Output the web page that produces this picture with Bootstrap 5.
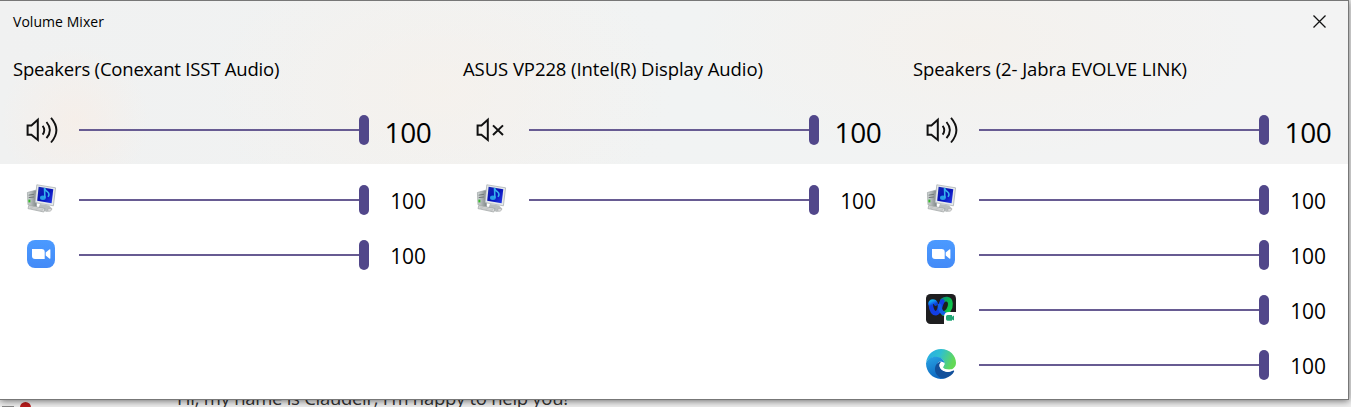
<!DOCTYPE html>
<html lang="en">
<head>
    <meta charset="UTF-8">
    <meta name="viewport" content="width=device-width, initial-scale=1.0">
    <title>Volume Mixer</title>
    <link rel="stylesheet" href="https://cdn.jsdelivr.net/npm/bootstrap@5.3.0/dist/css/bootstrap.min.css">
    <script src="https://cdn.jsdelivr.net/npm/bootstrap@5.3.0/dist/js/bootstrap.bundle.min.js"></script>
    <style>
        body {
            height: 407px;
            background: #eee;
            color: #000;
            font-family: 'Open Sans', 'Noto Sans', sans-serif;
        }

        .mixer-window {
            width: 1349px;
            height: 400px;
            border: solid #777;
            border-width: 1px 1px 1px 0;
            box-shadow: 0 1px 7px rgba(0, 0, 0, 0.55);
            z-index: 1;
        }

        .title-bar {
            height: 41px;
            padding: 0 21px 0 13px;
        }

        .window-title {
            font-size: 14px;
            letter-spacing: 0.05px;
        }

        .acrylic {
            height: 163px;
            background:
                radial-gradient(circle at 75px 120px, rgba(249, 237, 228, 0.6), transparent 75px),
                radial-gradient(ellipse 230px 150px at 440px 90px, rgba(249, 240, 231, 0.5), transparent),
                radial-gradient(ellipse 280px 120px at 970px 40px, rgba(247, 239, 230, 0.45), transparent),
                linear-gradient(90deg, #f0f1f1, #f1f3f3 50%, #f3f3f3);
        }

        .device {
            width: 450px;
            padding-left: 13px;
        }

        .device-name {
            height: 56px;
            line-height: 54px;
            font-size: 18.5px;
            letter-spacing: -0.08px;
        }

        .device:first-child .device-name {
            letter-spacing: -0.2px;
        }

        .mixer-row {
            height: 55px;
            padding-left: 11px;
        }

        .master-row {
            height: 64px;
        }

        .mixer-icon {
            width: 36px;
            height: 36px;
            margin-right: 19px;
        }

        .slider {
            width: 290px;
            height: 30px;
        }

        .slider-track {
            height: 2px;
            background: #675b92;
        }

        .slider-thumb {
            width: 10px;
            height: 30px;
            border-radius: 5px;
            background: #51478a;
        }

        .level {
            width: 78px;
            padding-top: 3px;
            font-size: 21px;
            letter-spacing: -0.2px;
        }

        .master-row .level {
            padding-top: 3px;
            font-size: 28px;
            letter-spacing: -0.3px;
        }

        .page-behind {
            height: 7px;
        }

        .chat-line {
            margin: -14px 0 0 177px;
            font-size: 18.5px;
            line-height: 24px;
            letter-spacing: -0.28px;
            color: #333;
        }

        .tray-dash {
            width: 12px;
            height: 2px;
            margin: 6px 6px 0 2px;
            background: #888;
        }

        .tray-dot {
            width: 11px;
            height: 11px;
            margin-top: 2px;
            background: #b91c1c;
        }
    </style>
</head>
<body class="overflow-hidden">

<svg class="position-absolute" width="0" height="0" aria-hidden="true">
    <defs>
        <linearGradient id="screenFill" x1="0" y1="0" x2="1" y2="1">
            <stop offset="0" stop-color="#1526ae"/>
            <stop offset=".5" stop-color="#0712b8"/>
            <stop offset="1" stop-color="#293dea"/>
        </linearGradient>
        <linearGradient id="caseFill" x1="0" y1="0" x2="1" y2="0">
            <stop offset="0" stop-color="#d5dada"/>
            <stop offset="1" stop-color="#7f8787"/>
        </linearGradient>
        <linearGradient id="zoomFill" x1="0" y1="0" x2="0" y2="1">
            <stop offset="0" stop-color="#4b9aff"/>
            <stop offset="1" stop-color="#438af7"/>
        </linearGradient>
        <linearGradient id="webexLeft" x1="0" y1="0" x2="1" y2="1">
            <stop offset="0" stop-color="#12a9ef"/>
            <stop offset=".5" stop-color="#1272ed"/>
            <stop offset="1" stop-color="#0b43d6"/>
        </linearGradient>
        <linearGradient id="webexRight" x1="0" y1="0" x2="1" y2="1">
            <stop offset="0" stop-color="#0b8f7a"/>
            <stop offset=".4" stop-color="#09b450"/>
            <stop offset="1" stop-color="#13d34c"/>
        </linearGradient>
        <linearGradient id="edgeTop" x1="0" y1="0" x2="1" y2=".3">
            <stop offset="0" stop-color="#28a9e8"/>
            <stop offset=".5" stop-color="#2fbfd0"/>
            <stop offset="1" stop-color="#63d957"/>
        </linearGradient>
        <linearGradient id="edgeLeft" x1="0" y1="0" x2=".4" y2="1">
            <stop offset="0" stop-color="#2aa5e5"/>
            <stop offset="1" stop-color="#0e68c0"/>
        </linearGradient>
    </defs>

    <symbol id="speaker" viewBox="0 0 36 36">
        <path d="M3.6 13.4H7.4L13.8 7.8V28L7.4 22.8H3.6Z" fill="none" stroke="#111" stroke-width="2"/>
    </symbol>
    <symbol id="speaker-on" viewBox="0 0 36 36">
        <use href="#speaker" width="36" height="36"/>
        <g fill="none" stroke="#111" stroke-width="1.9">
            <path d="M18.6 13.8Q22 18.1 18.6 22.6"/>
            <path d="M22.5 10Q29.3 18.1 22.5 26.2"/>
            <path d="M27 5.8Q37.8 18.1 27 30.5"/>
        </g>
    </symbol>
    <symbol id="speaker-muted" viewBox="0 0 36 36">
        <use href="#speaker" width="36" height="36"/>
        <path d="M19 13.4L29 23M29 13.4L19 23" fill="none" stroke="#111" stroke-width="2"/>
    </symbol>
    <symbol id="system-sounds" viewBox="0 0 36 36">
        <path d="M3.4 10.5L12.5 8V25L4 22.8Z" fill="url(#caseFill)" stroke="#9ca3a3" stroke-width=".7"/>
        <path d="M4.6 13.2L10 12.3M4.7 15.6L10 15" stroke="#727a7a" stroke-width="1"/>
        <path d="M4.4 17.6h2v2.8h-2z" fill="#37b929"/>
        <path d="M16 22L25 23.5L28.5 27L23 30L14 27Z" fill="#b9bdbd"/>
        <path d="M12.8 2.8L31.6 5.8L29.4 23.8L11 20.6Z" fill="#e6e9ea" stroke="#a3abae" stroke-width=".7"/>
        <path d="M14.6 4.8L29.3 7.2L27.6 21.2L13.2 18.8Z" fill="url(#screenFill)"/>
        <path d="M4.8 23.6L21 26.5L19.8 30L4 26.6Z" fill="#e5e6e6" stroke="#9a9f9f" stroke-width=".7"/>
        <path d="M5.5 25L19.5 27.7M5.3 26.1L19 28.9" stroke="#a8abab" stroke-width=".6"/>
        <path d="M23.5 27.2Q26 25.6 27.8 27.2Q27 30 24.2 29.3Z" fill="#dcdede" stroke="#aaa" stroke-width=".6"/>
        <ellipse cx="18.9" cy="15.8" rx="2.9" ry="2.2" fill="#269de8"/>
        <path d="M20.9 15.8L20.5 6Q21.3 8.8 23.5 9.8Q26 11.6 24.1 14.8" fill="none" stroke="#36b0ed" stroke-width="1.6"/>
    </symbol>
    <symbol id="zoom-app" viewBox="0 0 36 36">
        <rect x="3" y="3" width="28" height="28" rx="8" fill="url(#zoomFill)"/>
        <path d="M8 12H17.6Q20.7 12 20.7 15V22H11Q8 22 8 19Z" fill="#fff"/>
        <path d="M21.7 15.5L25.3 12.5Q26.4 11.9 26.4 13V21Q26.4 22.1 25.3 21.4L21.7 18.6Z" fill="#fff"/>
    </symbol>
    <symbol id="webex-app" viewBox="0 0 36 36">
        <rect x="2" y="2" width="30" height="30" rx="4.5" fill="#1e1e20"/>
        <g fill="none" stroke-linecap="round">
            <path d="M18.5 8.6Q20.8 6.8 23 7.2C27.4 8 27.2 14.5 24.4 18.4Q22.6 21 20 21.6" stroke="url(#webexRight)" stroke-width="4.8"/>
            <path d="M6.6 11.4Q7.6 21.3 12 21.2C16.3 20.8 15.6 12.5 18.4 9.4" stroke="#123ee4" stroke-width="4.6"/>
            <path d="M6.6 11.8C6.8 8.8 10.4 8.6 11.8 11.6" stroke="url(#webexLeft)" stroke-width="4.4"/>
            <path d="M15.6 13.5C16 17.5 17 20.8 20 21.4" stroke="#1160e6" stroke-width="4"/>
        </g>
        <path d="M20 32V25Q20 20 25 20H32V32Z" fill="#fff"/>
        <path d="M23.6 23H28V24.7L30 23.5V28.5L28 27.4V28.8H23.6Q22 28.8 22 27V24.5Q22 23 23.6 23Z" fill="#22a777"/>
    </symbol>
    <symbol id="edge-app" viewBox="0 0 36 36">
        <path d="M2 16C3 7.5 9.5 2 17 2C26 2 32 9 32 15.7C32 20 28.8 22.7 24.8 22.7C21.2 22.7 19 21.5 19 20.3C19 19.3 20.5 18.8 20.5 16.6C20.5 13 16.8 10.2 12 10.2C7 10.2 3.5 12.7 2 16Z" fill="url(#edgeTop)"/>
        <path d="M2 16.3C3.1 12.3 7.1 9.7 12 9.7C16.9 9.7 20.5 13 20.5 16.6L17.5 14.8C14.9 13.5 12.3 17.2 12.3 21C12.3 26.5 17.5 30 22.5 30.7C12 35 2 27 2 16.3Z" fill="url(#edgeLeft)"/>
        <path d="M16.2 14.8C12.6 16 10.8 19 11 23C11.5 28 16 32 21.5 31.2C25.5 30 28.7 27.4 30 24.8C30.5 23.9 29.7 23.3 28.8 23.8C23.5 26.5 15.5 23.8 15.5 18.6C15.5 17 16 16 17.5 14.8Z" fill="#12509b"/>
        <path d="M17.6 14.8C15.6 16 15 18.4 16 20.6C17.6 24 22 25.6 26.5 24.6L27.5 22.2C23 23.4 19 21.8 19 20.3C19 19.3 20.5 18.8 20.5 16.6Q19.6 15 17.6 14.8Z" fill="#fff"/>
    </symbol>
</svg>

<main class="mixer-window position-relative bg-white">
    <div class="acrylic">
        <header class="title-bar d-flex align-items-center justify-content-between">
            <span class="window-title">Volume Mixer</span>
            <svg width="15" height="15" viewBox="0 0 15 15" role="img" aria-label="Close">
                <path d="M1.5 1.5L13.5 13.5M13.5 1.5L1.5 13.5" stroke="#111" stroke-width="1.3"/>
            </svg>
        </header>
        <div class="d-flex" id="masters"></div>
    </div>
    <div class="d-flex pt-2" id="apps"></div>
</main>

<div class="page-behind d-flex align-items-start overflow-hidden position-relative">
    <div class="position-absolute d-flex">
        <div class="tray-dash"></div>
        <div class="tray-dot rounded-circle"></div>
    </div>
    <div class="chat-line text-nowrap">Hi, my name is Claudeir, I'm happy to help you!</div>
</div>

<script>
    const devices = [
        { name: "Speakers (Conexant ISST Audio)", icon: "speaker-on", level: 100, apps: ["system-sounds", "zoom-app"] },
        { name: "ASUS VP228 (Intel(R) Display Audio)", icon: "speaker-muted", level: 100, apps: ["system-sounds"] },
        { name: "Speakers (2- Jabra EVOLVE LINK)", icon: "speaker-on", level: 100, apps: ["system-sounds", "zoom-app", "webex-app", "edge-app"] }
    ];

    function mixerRow(icon, level, extra = "") {
        return `
            <div class="mixer-row ${extra} d-flex align-items-center">
                <svg class="mixer-icon flex-shrink-0"><use href="#${icon}"/></svg>
                <div class="slider d-flex align-items-center flex-shrink-0">
                    <div class="slider-track flex-grow-1"></div>
                    <div class="slider-thumb"></div>
                </div>
                <div class="level text-center lh-1">${level}</div>
            </div>`;
    }

    document.getElementById("masters").innerHTML = devices.map(d => `
        <section class="device flex-shrink-0">
            <div class="device-name text-nowrap">${d.name}</div>
            ${mixerRow(d.icon, d.level, "master-row")}
        </section>`).join("");

    document.getElementById("apps").innerHTML = devices.map(d => `
        <section class="device flex-shrink-0">
            ${d.apps.map(app => mixerRow(app, 100)).join("")}
        </section>`).join("");
</script>

</body>
</html>
